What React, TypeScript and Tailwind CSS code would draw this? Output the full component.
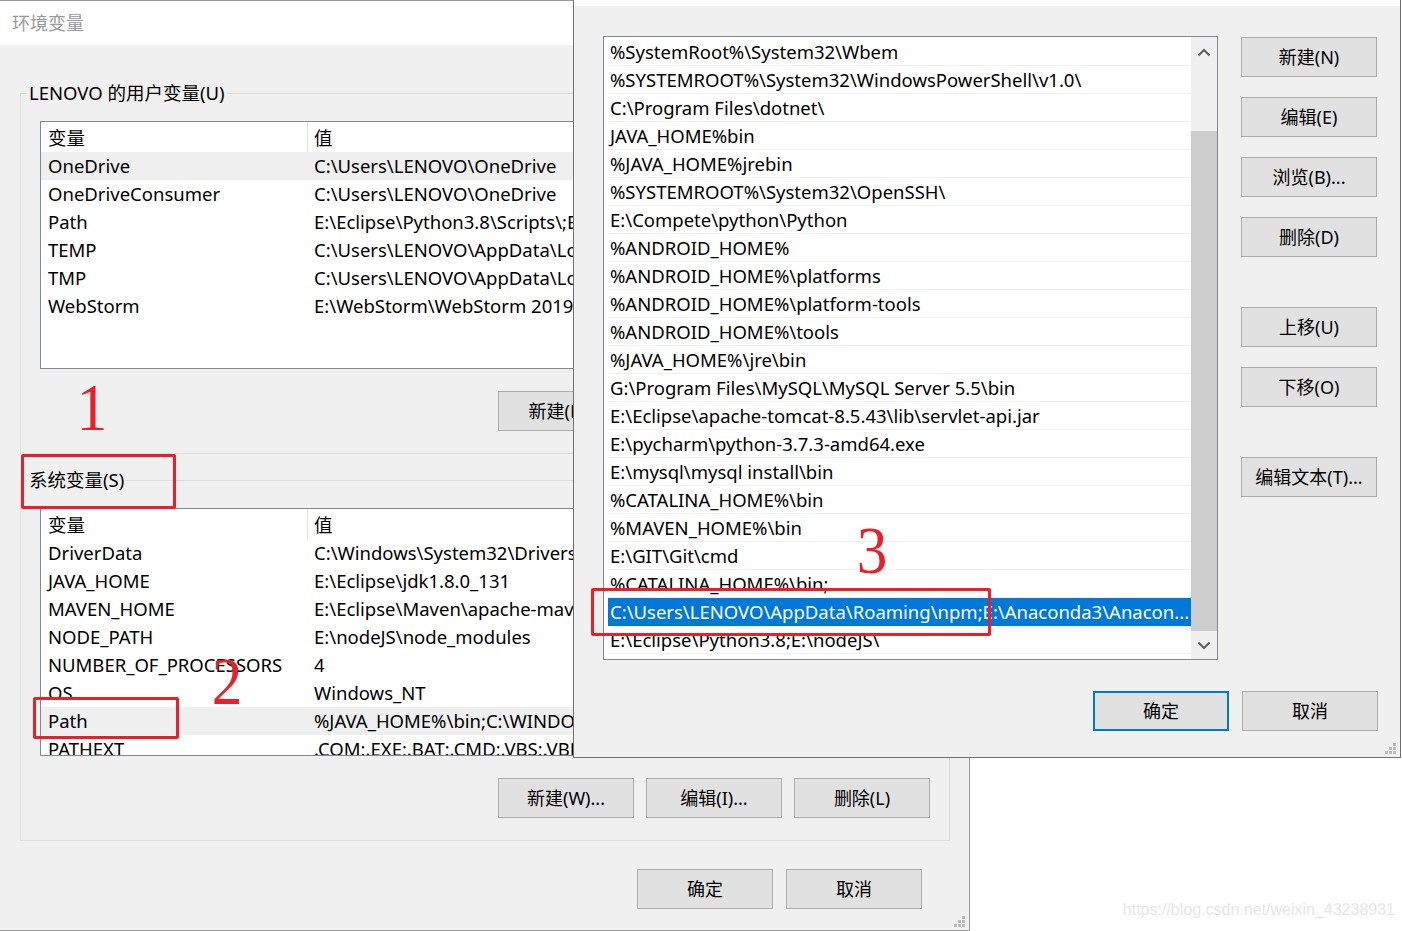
import React from "react";

const FONT = "font-['Noto_Sans','Noto_Sans_CJK_SC',sans-serif]";

const userVars: [string, string][] = [
  ["OneDrive", "C:\\Users\\LENOVO\\OneDrive"],
  ["OneDriveConsumer", "C:\\Users\\LENOVO\\OneDrive"],
  ["Path", "E:\\Eclipse\\Python3.8\\Scripts\\;E:\\Eclipse\\Python3.8\\"],
  ["TEMP", "C:\\Users\\LENOVO\\AppData\\Local\\Temp"],
  ["TMP", "C:\\Users\\LENOVO\\AppData\\Local\\Temp"],
  ["WebStorm", "E:\\WebStorm\\WebStorm 2019.3.3\\bin;"],
];

const sysVars: [string, string][] = [
  ["DriverData", "C:\\Windows\\System32\\Drivers\\DriverData"],
  ["JAVA_HOME", "E:\\Eclipse\\jdk1.8.0_131"],
  ["MAVEN_HOME", "E:\\Eclipse\\Maven\\apache-maven-3.6.3"],
  ["NODE_PATH", "E:\\nodeJS\\node_modules"],
  ["NUMBER_OF_PROCESSORS", "4"],
  ["OS", "Windows_NT"],
  ["Path", "%JAVA_HOME%\\bin;C:\\WINDOWS\\system32;C:\\WINDOWS;"],
  ["PATHEXT", ".COM;.EXE;.BAT;.CMD;.VBS;.VBE;.JS;.JSE;.WSF;.WSH;.MSC"],
];

const pathItems = [
  "%SystemRoot%\\System32\\Wbem",
  "%SYSTEMROOT%\\System32\\WindowsPowerShell\\v1.0\\",
  "C:\\Program Files\\dotnet\\",
  "JAVA_HOME%bin",
  "%JAVA_HOME%jrebin",
  "%SYSTEMROOT%\\System32\\OpenSSH\\",
  "E:\\Compete\\python\\Python",
  "%ANDROID_HOME%",
  "%ANDROID_HOME%\\platforms",
  "%ANDROID_HOME%\\platform-tools",
  "%ANDROID_HOME%\\tools",
  "%JAVA_HOME%\\jre\\bin",
  "G:\\Program Files\\MySQL\\MySQL Server 5.5\\bin",
  "E:\\Eclipse\\apache-tomcat-8.5.43\\lib\\servlet-api.jar",
  "E:\\pycharm\\python-3.7.3-amd64.exe",
  "E:\\mysql\\mysql install\\bin",
  "%CATALINA_HOME%\\bin",
  "%MAVEN_HOME%\\bin",
  "E:\\GIT\\Git\\cmd",
  "%CATALINA_HOME%\\bin;",
  "C:\\Users\\LENOVO\\AppData\\Roaming\\npm;E:\\Anaconda3\\Anacon...",
  "E:\\Eclipse\\Python3.8;E:\\nodeJS\\",
];

const Btn = ({ label, primary }: { label: string; primary?: boolean }) => (
  <button
    className={`w-[136px] h-[40px] shrink-0 bg-[#e1e1e1] text-[18px] text-black leading-none ${
      primary ? "border-2 border-[#0078d7]" : "border border-[#adadad]"
    }`}
  >
    {label}
  </button>
);

const Grip = () => (
  <svg width="12" height="12" viewBox="0 0 12 12" className="fill-[#bcbcbc]">
    <rect x="8" y="0" width="3" height="3" />
    <rect x="4" y="4" width="3" height="3" />
    <rect x="8" y="4" width="3" height="3" />
    <rect x="0" y="8" width="3" height="3" />
    <rect x="4" y="8" width="3" height="3" />
    <rect x="8" y="8" width="3" height="3" />
  </svg>
);

const VarList = ({ rows, selected }: { rows: [string, string][]; selected: number }) => (
  <div className="w-[890px] h-[248px] border border-[#828790] bg-white overflow-hidden">
    <div className="flex h-[30px] items-center text-[18.5px]">
      <div className="w-[267px] h-full border-r border-[#e5e5e5] pl-[7px] leading-[31px]">变量</div>
      <div className="pl-[6px] leading-[31px]">值</div>
    </div>
    {rows.map(([k, v], i) => (
      <div
        key={k + i}
        className={`flex h-[28px] text-[18.5px] leading-[28px] whitespace-nowrap ${
          i === selected ? "bg-[#efefef]" : ""
        }`}
      >
        <div className="w-[267px] pl-[7px]">{k}</div>
        <div className="pl-[6px]">{v}</div>
      </div>
    ))}
  </div>
);

const Legend = ({ text }: { text: string }) => (
  <legend className="ml-[6px] px-[2px] text-[18.5px] leading-[28px]">{text}</legend>
);

export default function App() {
  return (
    <div className={`relative w-[1402px] h-[931px] bg-white overflow-hidden text-black ${FONT}`}>
      {/* base window: 环境变量 */}
      <div className="w-[970px] h-[931px] flex flex-col border-t border-r border-b border-[#9a9a9a] bg-[#f0f0f0]">
        <div className="h-[44px] bg-white pl-[12px] flex items-center text-[18px] text-[#9a9a9a]">环境变量</div>
        <fieldset className="ml-[20px] mt-[34px] w-[930px] border border-[#dcdcdc] pb-[22px]">
          <Legend text="LENOVO 的用户变量(U)" />
          <div className="px-[19px]">
            <div className="mt-[14px]">
              <VarList rows={userVars} selected={0} />
            </div>
            <div className="mt-[22px] flex justify-end gap-[12px]">
              <Btn label="新建(N)..." />
              <Btn label="编辑(E)..." />
              <Btn label="删除(D)" />
            </div>
          </div>
        </fieldset>
        <fieldset className="ml-[20px] mt-[12px] w-[930px] border border-[#dcdcdc] pb-[22px]">
          <Legend text="系统变量(S)" />
          <div className="px-[19px]">
            <div className="mt-[14px]">
              <VarList rows={sysVars} selected={6} />
            </div>
            <div className="mt-[22px] flex justify-end gap-[12px]">
              <Btn label="新建(W)..." />
              <Btn label="编辑(I)..." />
              <Btn label="删除(L)" />
            </div>
          </div>
        </fieldset>
        <div className="mt-[28px] pr-[47px] flex justify-end gap-[13px]">
          <Btn label="确定" />
          <Btn label="取消" />
        </div>
        <div className="mt-auto flex justify-end pr-[3px] pb-[2px]">
          <Grip />
        </div>
      </div>

      {/* edit path window */}
      <div className="absolute left-[573px] top-0 w-[828px] h-[758px] flex flex-col border-l border-r border-b border-[#707070] bg-[#f0f0f0]">
        <div className="h-[6px] bg-white" />
        <div className="flex pl-[29px] pt-[30px]">
          <div className="w-[615px] h-[624px] border border-[#828790] bg-white flex">
            <div className="flex-1 pt-[1px] overflow-hidden">
              {pathItems.map((p, i) => (
                <div key={i} className="h-[28px] pl-[4px] text-[18.5px] leading-[28px] whitespace-nowrap">
                  <div
                    className={`h-full pl-[2px] border-b overflow-hidden ${
                      i === 20 ? "bg-[#0078d7] text-white border-[#0078d7]" : "border-[#f0f0f0]"
                    }`}
                  >
                    {p}
                  </div>
                </div>
              ))}
            </div>
            <div className="w-[26px] bg-[#f0f0f0] flex flex-col">
              <div className="h-[30px] flex items-center justify-center">
                <svg width="14" height="9" viewBox="0 0 14 9">
                  <polyline points="1.5,7.5 7,2 12.5,7.5" fill="none" stroke="#606060" strokeWidth="2" />
                </svg>
              </div>
              <div className="h-[64px]" />
              <div className="h-[500px] bg-[#cdcdcd]" />
              <div className="flex-1 flex items-center justify-center">
                <svg width="14" height="9" viewBox="0 0 14 9">
                  <polyline points="1.5,1.5 7,7 12.5,1.5" fill="none" stroke="#606060" strokeWidth="2" />
                </svg>
              </div>
            </div>
          </div>
          <div className="ml-[23px] pt-[1px] flex flex-col">
            <Btn label="新建(N)" />
            <div className="h-[20px]" />
            <Btn label="编辑(E)" />
            <div className="h-[20px]" />
            <Btn label="浏览(B)..." />
            <div className="h-[20px]" />
            <Btn label="删除(D)" />
            <div className="h-[50px]" />
            <Btn label="上移(U)" />
            <div className="h-[20px]" />
            <Btn label="下移(O)" />
            <div className="h-[50px]" />
            <Btn label="编辑文本(T)..." />
          </div>
        </div>
        <div className="mt-[31px] pr-[22px] flex justify-end gap-[13px]">
          <Btn label="确定" primary />
          <Btn label="取消" />
        </div>
        <div className="mt-auto flex justify-end pr-[3px] pb-[2px]">
          <Grip />
        </div>
      </div>

      {/* annotations */}
      <div className="absolute left-[75px] top-[373px] text-[68px] leading-none text-[#e8202a] font-['Liberation_Serif',serif] scale-x-90">1</div>
      <div className="absolute left-[210px] top-[647px] text-[68px] leading-none text-[#e8202a] font-['Liberation_Serif',serif] scale-x-90">2</div>
      <div className="absolute left-[855px] top-[516px] text-[68px] leading-none text-[#e8202a] font-['Liberation_Serif',serif] scale-x-90">3</div>
      <div className="absolute left-[21px] top-[454px] w-[155px] h-[55px] border-[3px] border-[#e8202a] rounded-[2px]" />
      <div className="absolute left-[33px] top-[697px] w-[146px] h-[42px] border-[3px] border-[#e8202a] rounded-[2px]" />
      <div className="absolute left-[591px] top-[588px] w-[400px] h-[48px] border-[3px] border-[#e8202a] rounded-[2px]" />

      <div className="absolute right-[7px] bottom-[9px] text-[16px] text-[#e6e6e6] font-['Liberation_Sans',sans-serif]">
        https://blog.csdn.net/weixin_43238931
      </div>
    </div>
  );
}
